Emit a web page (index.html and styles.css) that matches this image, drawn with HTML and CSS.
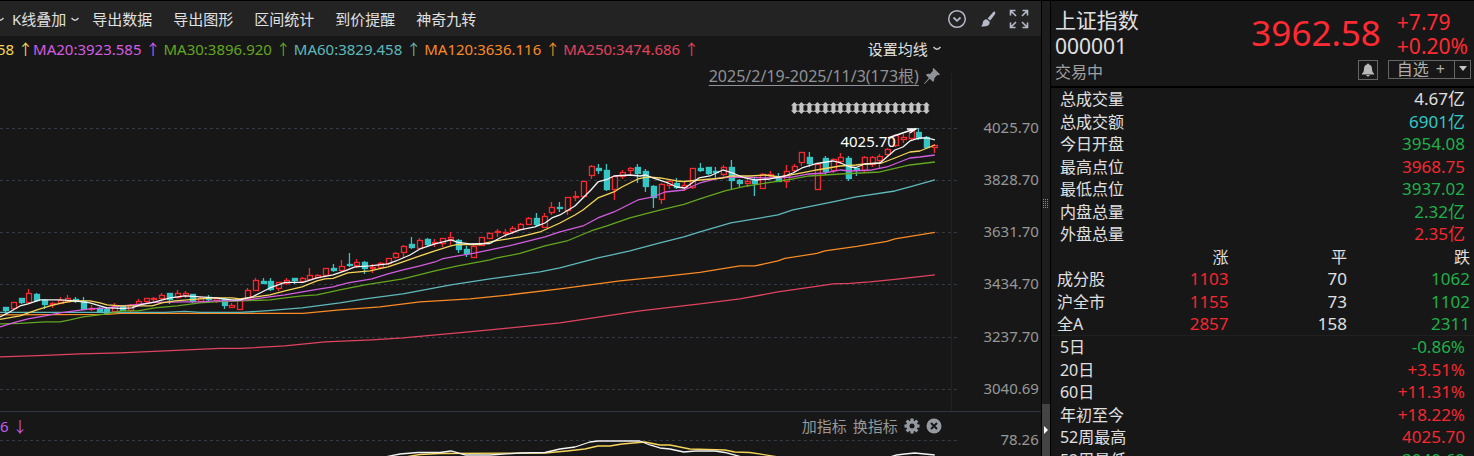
FILE: index.html
```html
<!DOCTYPE html>
<html lang="zh-CN">
<head>
    <meta charset="UTF-8">
    <meta name="viewport" content="width=device-width, initial-scale=1.0">
    <title>上证指数 000001</title>
    <link rel="stylesheet" href="styles.css">
</head>
<body>
    <div class="container">
        <!-- Chart section -->
        <main class="chart-section">
            <div class="toolbar">
                <svg class="chevron" viewBox="0 0 8 5"><path d="M0.5 1 Q4 5.500 7.500 1"/></svg>
                <button type="button" class="overlay-btn">K线叠加
                    <svg class="chevron" viewBox="0 0 8 5"><path d="M0.5 1 Q4 5.500 7.500 1"/></svg>
                </button>
                <div class="menu">
                    <button type="button">导出数据</button>
                    <button type="button">导出图形</button>
                    <button type="button">区间统计</button>
                    <button type="button">到价提醒</button>
                    <button type="button">神奇九转</button>
                </div>
                <div class="tools">
                    <button type="button" aria-label="更多">
                        <svg viewBox="0 0 20 20" fill="none" stroke="#b4bac8" stroke-width="1.500"><circle cx="10" cy="10" r="8.300"/><path d="M6.500 8.500 L10 11.800 L13.500 8.500" stroke-width="1.800"/></svg>
                    </button>
                    <button type="button" aria-label="画线">
                        <svg viewBox="0 0 20 20" fill="#b4bac8"><path d="M16.800 2.600 Q18 3.600 17 5.200 L12.300 11.600 L9.600 9.400 L15 3.200 Q15.900 2.100 16.800 2.600Z"/><path d="M8.800 10.200 L11.500 12.400 Q12 15.500 9.600 16.700 Q6.500 18 3 17.200 Q4.600 16.300 4.800 13.800 Q5.200 10.200 8.800 10.200Z"/></svg>
                    </button>
                    <button type="button" aria-label="全屏">
                        <svg viewBox="0 0 20 20" fill="none" stroke="#b4bac8" stroke-width="1.600"><path d="M1.500 6.500 V1.500 H6.500 M1.500 1.500 L7 7 M13.500 1.500 H18.500 V6.500 M18.500 1.500 L13 7 M1.500 13.500 V18.500 H6.500 M1.500 18.500 L7 13 M13.500 18.500 H18.500 V13.500 M18.500 18.500 L13 13"/></svg>
                    </button>
                </div>
            </div>

            <div class="legend">
                <span class="ma ma-yellow">58 <i>↑</i></span>
                <span class="ma ma-pink">MA20:3923.585 <i>↑</i></span>
                <span class="ma ma-green">MA30:3896.920 <i>↑</i></span>
                <span class="ma ma-teal">MA60:3829.458 <i>↑</i></span>
                <span class="ma ma-orange">MA120:3636.116 <i>↑</i></span>
                <span class="ma ma-red">MA250:3474.686 <i>↑</i></span>
                <button type="button" class="ma-setting">设置均线
                    <svg class="chevron" viewBox="0 0 8 5"><path d="M0.5 1 Q4 5.500 7.500 1"/></svg>
                </button>
            </div>

            <div class="chart">
                <div class="range">
                    <a href="#">2025/2/19-2025/11/3(173根)</a>
                    <svg viewBox="0 0 18 18" fill="#8f9296"><path d="M10.500 1 L17 7.300 L15.800 8.300 L14.300 8 L11.300 11.200 Q11.700 13.500 10.200 15 L6.800 11.800 L1.500 17 L1 16.500 L5.900 10.900 L2.800 7.800 Q4.600 6.200 7 6.900 L10 3.800 L9.600 2.200Z"/></svg>
                </div>
                <svg id="kline" class="kline" viewBox="0 64 1041 347" role="img" aria-label="日K线"></svg>
            </div>

            <div class="indicator">
                <div class="indicator-head">
                    <span class="ma-violet">6 <i>↓</i></span>
                    <div class="indicator-actions">
                        <button type="button">加指标</button>
                        <button type="button">换指标</button>
                        <button type="button" aria-label="设置">
                            <svg viewBox="0 0 16 16"><g fill="#969ba1"><circle cx="8" cy="8" r="5.600"/><path id="tooth" d="M6.400 0.500 H9.600 V15.500 H6.400Z"/><use href="#tooth" transform="rotate(45 8 8)"/><use href="#tooth" transform="rotate(90 8 8)"/><use href="#tooth" transform="rotate(135 8 8)"/></g><circle cx="8" cy="8" r="2.500" fill="#171717"/></svg>
                        </button>
                        <button type="button" aria-label="关闭">
                            <svg viewBox="0 0 16 16"><circle cx="8" cy="8" r="7.500" fill="#969ba1"/><path d="M5 5 L11 11 M11 5 L5 11" stroke="#171717" stroke-width="2"/></svg>
                        </button>
                    </div>
                </div>
                <svg id="sub" class="kline" viewBox="0 434 1041 40" role="img" aria-label="指标"></svg>
            </div>
        </main>

        <!-- Splitter -->
        <div class="splitter">
            <div class="grip"></div>
            <button type="button" class="collapse" aria-label="收起"></button>
        </div>

        <!-- Quote section -->
        <aside class="quote-section">
            <header class="quote-header">
                <div class="name">
                    <h1>上证指数</h1>
                    <p class="code">000001</p>
                    <p class="status">交易中</p>
                </div>
                <div class="quote">
                    <div class="price-line">
                        <strong class="price">3962.58</strong>
                        <div class="change">
                            <span>+7.79</span>
                            <span>+0.20%</span>
                        </div>
                    </div>
                    <div class="actions">
                        <button type="button" class="bell" aria-label="提醒">
                            <svg viewBox="0 0 14 14" fill="#b8b8b8"><path d="M7 0.500 Q8 0.500 8 1.600 Q11 2.500 11 6 Q11 9.500 13 10.500 V11.500 H1 V10.500 Q3 9.500 3 6 Q3 2.500 6 1.600 Q6 0.500 7 0.500Z M5.300 12 H8.700 Q8.500 13.500 7 13.500 Q5.500 13.500 5.300 12Z"/></svg>
                        </button>
                        <div class="favor">
                            <button type="button" class="favor-add">自选 <span>+</span></button>
                            <button type="button" class="favor-more" aria-label="更多"></button>
                        </div>
                    </div>
                </div>
            </header>

            <table class="list totals">
                <tr><th scope="row">总成交量</th><td>4.67亿</td></tr>
                <tr><th scope="row">总成交额</th><td class="cyan">6901亿</td></tr>
                <tr><th scope="row">今日开盘</th><td class="down">3954.08</td></tr>
                <tr><th scope="row">最高点位</th><td class="up">3968.75</td></tr>
                <tr><th scope="row">最低点位</th><td class="down">3937.02</td></tr>
                <tr><th scope="row">内盘总量</th><td class="down">2.32亿</td></tr>
                <tr><th scope="row">外盘总量</th><td class="up">2.35亿</td></tr>
            </table>

            <table class="breadth">
                <tr><td></td><th scope="col">涨</th><th scope="col">平</th><th scope="col">跌</th></tr>
                <tr><th scope="row">成分股</th><td class="up">1103</td><td>70</td><td class="down">1062</td></tr>
                <tr><th scope="row">沪全市</th><td class="up">1155</td><td>73</td><td class="down">1102</td></tr>
                <tr><th scope="row">全A</th><td class="up">2857</td><td>158</td><td class="down">2311</td></tr>
            </table>

            <table class="list periods">
                <tr><th scope="row">5日</th><td class="down">-0.86%</td></tr>
                <tr><th scope="row">20日</th><td class="up">+3.51%</td></tr>
                <tr><th scope="row">60日</th><td class="up">+11.31%</td></tr>
                <tr><th scope="row">年初至今</th><td class="up">+18.22%</td></tr>
                <tr><th scope="row">52周最高</th><td class="up">4025.70</td></tr>
                <tr><th scope="row">52周最低</th><td class="down">3040.69</td></tr>
            </table>
        </aside>
    </div>

    <script src="chart.js"></script>
</body>
</html>
```

FILE: styles.css
```css
* {
    box-sizing: border-box;
}
body {
    margin: 0;
    height: 100vh;
    overflow: hidden;
    background-color: #171717;
    color: #e0e0e0;
    font-family: "Noto Sans", "Noto Sans CJK SC", sans-serif;
    font-size: 15px;
    line-height: 20px;
}
button {
    padding: 0;
    border: none;
    background: none;
    color: inherit;
    font: inherit;
    white-space: nowrap;
    cursor: pointer;
}
svg {
    display: block;
}
h1, p {
    margin: 0;
    font-weight: normal;
}
.container {
    display: grid;
    grid-template-columns: minmax(0, 246fr) 10px minmax(0, 100fr);
    height: 100%;
    border-top: 1px solid #000;
}
.chart-section {
    overflow: hidden;
}

/* toolbar */
.toolbar {
    display: flex;
    align-items: center;
    height: 35px;
    padding: 1px 12px 0 0;
    background-color: #232323;
}
.chevron {
    flex: none;
    width: 8px;
    height: 5px;
    fill: none;
    stroke: #d0d0d0;
    stroke-width: 1.500;
}
.toolbar > .chevron {
    margin: 0 8px 0 -4px;
}
.overlay-btn, .ma-setting {
    display: flex;
    align-items: center;
    gap: 5px;
}
.menu {
    display: flex;
    gap: 21px;
    margin-left: 13px;
}
.tools {
    display: flex;
    gap: 11px;
    margin-left: auto;
}
.tools svg {
    width: 20px;
    height: 20px;
}

/* moving averages */
.legend {
    display: flex;
    align-items: center;
    height: 28px;
    padding: 0 100px 3px 0;
    white-space: nowrap;
}
.ma {
    margin-right: 3px;
}
.ma:first-child {
    margin-left: -3px;
    margin-right: 0;
}
.legend i, .indicator-head i {
    font-family: "Noto Sans CJK SC", sans-serif;
    font-style: normal;
}
.ma-yellow { color: #f5d65a; }
.ma-pink { color: #d35de0; }
.ma-green { color: #63a61f; }
.ma-teal { color: #5fb9bc; }
.ma-orange { color: #f98b25; }
.ma-red { color: #e0435f; }
.ma-violet { color: #c55cf0; }
.ma-setting {
    margin-left: auto;
}

/* chart */
.chart {
    position: relative;
}
.range {
    position: absolute;
    top: 2px;
    right: 100px;
    display: flex;
    align-items: center;
    gap: 4px;
}
.range a {
    color: #8f9296;
    font-size: 16px;
    text-underline-offset: 3px;
}
.range svg {
    width: 18px;
    height: 18px;
}
.kline {
    width: 100%;
    overflow: visible;
    font-size: 15px;
}
.grid-line {
    stroke: #363b47;
    stroke-dasharray: 3 3;
}
.axis-line {
    stroke: #242424;
}
.axis-text {
    fill: #979797;
    text-anchor: end;
}
.line {
    fill: none;
    stroke-width: 1.300;
    stroke-linejoin: round;
}
.candle-up {
    fill: #171717;
    stroke: #f5272f;
    stroke-width: 1.300;
}
.candle-down {
    fill: #35c5c5;
    stroke: #35c5c5;
    stroke-width: 1.300;
}
.mark {
    fill: #c4c4c4;
}
.peak-text {
    fill: #fff;
    text-anchor: end;
}
.peak-line {
    fill: none;
    stroke: #fff;
    stroke-width: 1.500;
}

/* indicator */
.indicator {
    border-top: 1px solid #303641;
}
.indicator-head {
    display: flex;
    justify-content: space-between;
    align-items: center;
    height: 22px;
    padding: 6px 99px 0 0;
}
.indicator-actions {
    display: flex;
    align-items: center;
    gap: 6px;
    color: #989898;
}
.indicator-actions svg {
    width: 16px;
    height: 16px;
}

/* splitter */
.splitter {
    display: flex;
    flex-direction: column;
    align-items: center;
    background-color: #1d1d1d;
    border: solid #000;
    border-width: 0 1px;
}
.grip {
    width: 6px;
    height: 10px;
    margin: auto;
    background: repeating-linear-gradient(#1d1d1d 0 1px, transparent 1px 2px), repeating-linear-gradient(90deg, #8a8a8a 0 1px, #1d1d1d 1px 2px);
}
.collapse {
    display: flex;
    align-items: center;
    justify-content: center;
    width: 8px;
    height: 52px;
    background-color: #444;
}
.collapse::before {
    content: "";
    border: 4px solid transparent;
    border-left-color: #fff;
    border-right-width: 0;
}

/* quote panel */
.quote-section {
    overflow: hidden;
}
.quote-header {
    display: flex;
    justify-content: space-between;
    height: 87px;
    padding: 6px 3px 0 4px;
    border-bottom: 2px solid #000;
}
.name h1, .code {
    font-size: 21px;
    line-height: 26px;
}
.status {
    font-size: 16px;
    line-height: 26px;
    color: #a0a0a0;
}
.price-line {
    display: flex;
    justify-content: flex-end;
    gap: 16px;
    padding-right: 3px;
    color: #ff2a32;
}
.price {
    font-size: 35px;
    line-height: 52px;
    font-weight: normal;
}
.change {
    display: flex;
    flex-direction: column;
    padding-top: 3px;
    font-size: 21px;
    line-height: 24px;
}
.actions {
    display: flex;
    justify-content: flex-end;
    gap: 10px;
    padding-top: 1px;
}
.bell {
    display: flex;
    align-items: center;
    justify-content: center;
    width: 20px;
    height: 20px;
    border: 1px solid #666;
}
.bell svg {
    width: 14px;
    height: 14px;
}
.favor {
    display: flex;
    height: 19px;
    border: 1px solid #666;
    color: #b0b0b0;
}
.favor-add {
    padding: 0 9px 0 8px;
    font-size: 16px;
    line-height: 17px;
}
.favor-add span {
    margin-left: 3px;
}
.favor-more {
    display: flex;
    justify-content: center;
    width: 16px;
    padding-top: 5px;
    border-left: 1px solid #666;
}
.favor-more::before {
    content: "";
    border: 4px solid transparent;
    border-top: 5px solid #c4c4c4;
    border-bottom-width: 0;
}

table {
    width: 100%;
    border-collapse: collapse;
    table-layout: fixed;
    font-size: 16px;
    line-height: 20px;
}
tr {
    height: 22px;
}
.totals tr:nth-child(even), .breadth tr:nth-child(odd), .periods tr:nth-child(odd) {
    height: 23px;
}
th, td {
    padding: 0;
    font-weight: normal;
    text-align: right;
}
td {
    font-size: 17px;
}
th[scope="row"] {
    text-align: left;
}
.list th {
    padding-left: 9px;
}
.list td {
    padding-right: 9px;
}
.breadth th[scope="row"] {
    padding-left: 6px;
}
.breadth tr > :nth-child(1) { width: 18%; }
.breadth tr > :nth-child(2) { width: 24%; }
.breadth tr > :nth-child(3) { width: 28%; }
.breadth tr > :nth-child(4) { padding-right: 4px; }
.breadth {
    border-bottom: 1px solid #202020;
}
.up { color: #f5272f; }
.down { color: #1fb04b; }
.cyan { color: #35c5c5; }
```

FILE: chart.js
```javascript
// [up = 1 / down = 0, body top, body bottom, high, low]
const candles = [
    [0,307,310,307,313],[1,302,308,302,308],[0,298,302,298,303],[1,293,302,289,302],[0,294,300,293,301],
    [0,300,304,299,308],[1,303,304,302,307],[1,300,303,297,303],[1,298,301,295,301],[0,299,301,297,302],
    [0,301,309,297,309],[1,308,309,305,310],[0,308,312,307,312],[0,309,313,308,313],[1,306,311,303,312],
    [0,306,310,305,310],[1,305,310,304,311],[1,301,304,299,305],[1,298,301,298,302],[1,298,299,297,301],
    [1,295,298,293,299],[0,293,299,293,303],[1,293,297,290,298],[1,293,295,291,297],[0,294,301,294,302],
    [1,298,301,297,302],[0,297,299,295,302],[1,298,300,297,302],[0,299,305,298,308],[1,305,307,303,307],
    [1,300,309,299,309],[1,290,299,288,299],[1,280,290,278,290],[0,281,283,278,283],[0,281,289,278,290],
    [1,282,288,282,290],[1,280,283,278,284],[0,278,280,278,283],[1,278,281,277,282],[1,275,279,268,280],
    [1,275,277,274,278],[1,268,275,268,276],[0,268,270,264,271],[1,266,270,260,271],[0,264,265,253,266],
    [1,262,265,259,267],[0,262,268,261,273],[1,267,268,264,272],[1,263,267,262,268],[1,258,263,258,264],
    [1,253,257,252,258],[1,246,252,245,257],[0,244,247,237,248],[1,240,248,238,248],[0,239,244,238,246],
    [1,242,243,239,246],[1,238,243,238,246],[1,237,239,232,244],[0,240,249,239,252],[0,249,253,246,256],
    [1,246,257,245,257],[1,237,245,237,245],[1,233,238,232,238],[1,231,232,229,236],[1,232,233,229,236],
    [1,228,231,226,233],[1,224,229,223,229],[1,218,224,217,224],[0,218,224,213,225],[1,216,227,213,227],
    [1,207,212,202,214],[0,207,208,202,211],[1,197,210,197,214],[1,196,197,191,200],[1,181,196,181,197],
    [1,166,175,165,178],[0,168,170,164,173],[0,170,189,164,190],[1,176,189,176,199],[1,172,176,170,178],
    [1,168,170,167,174],[0,167,173,164,182],[0,171,186,169,191],[0,186,197,185,207],[1,184,199,183,203],
    [1,181,185,180,188],[0,183,187,178,188],[1,185,187,182,190],[1,168,187,168,188],[0,168,170,163,171],
    [0,167,173,167,174],[0,171,172,167,178],[1,167,174,165,176],[0,167,180,160,188],[0,180,183,179,186],
    [1,181,183,178,186],[0,180,183,177,195],[1,174,188,173,188],[1,174,175,171,178],[0,178,181,173,181],
    [1,171,181,165,187],[1,166,170,164,171],[1,152,162,152,165],[0,157,163,152,166],[1,164,189,163,189],
    [0,158,171,156,174],[1,159,170,158,172],[1,157,161,153,163],[0,158,178,156,180],[0,168,169,167,175],
    [1,157,170,156,171],[1,157,164,156,166],[1,156,160,154,168],[1,149,154,148,155],[1,135,145,134,146],
    [1,137,139,134,142],[1,130,138,128,140],[0,132,138,128,139],[0,137,147,136,148],[1,145,147,144,152]
];

const averages = [
    ['#e0435f', '0,357 45,355.5 80,354 120,353 165,351 220,348.5 240,348.5 285,346 325,342 372,340 403,338 458,333 490,330 560,323 640,311 700,304 740,299 778,292 785,291 820,286 833,284 850,283.5 870,282 895,279.5 935,275'],
    ['#f98b25', '0,315 107,314.5 120,313.5 303,313.5 340,310 380,307 420,302 470,299 500,296 560,289 620,281 660,277 700,272.5 740,266 755,266 778,261 785,258.5 817,253.5 825,251 857,246.5 887,241.5 895,239 935,232.5'],
    ['#5fb9bc', '0,312.5 165,312.5 185,311.5 200,312.5 240,312.5 265,311 302,308 340,303 365,299 403,294 435,288 451,285 490,279 540,272 560,268 598,258 630,251 660,243 684,237 700,232 731,223 778,215 793,210 833,202 856,197 895,191 910,187 935,180'],
    ['#63a61f', '0,324 20,323.5 45,322 60,322 70,320 83,317 107,314 122,311 138,311 155,308 177,306 200,303 215,302 240,301 270,300 285,298 302,296 317,295 340,290 365,285 403,279 435,271 458,266 490,260 497,258 520,253.5 545,246 567,241 591,231 607,226 630,218 653,212 665,209 684,204.5 700,199 725,191 747,186 793,179 809,176 841,174 880,172 910,165 935,162'],
    ['#d35de0', '0,327 13,323 28,319 45,316 60,313 75,311 90,309 107,308 122,306 138,304.5 155,302.5 185,302 200,302 215,301 232,301 247,300 262,298 285,295 317,289.5 333,287 348,283 372,279 388,274 403,270 420,266 435,262 442,259 458,256 473,253.5 490,250 513,245 545,237 560,232 583,226 598,218 614,212 638,200 653,197 665,192 684,190 700,183 720,178 731,177 770,178 793,177 809,174 825,173 841,170 850,171 872,170 887,167 910,158 920,157 935,155'],
    ['#f5d65a', '0,319.5 20,316 37,310 50,306 62,303 75,301 90,301 100,303 107,305 122,306 138,306 152,306 162,303 175,301 200,299 215,298 232,298 240,299 247,298 270,295 285,291 302,287 317,281 325,279 333,278.5 348,273 370,271 388,267 403,262 420,256 435,251 451,246 458,244.5 480,244.5 495,241 520,237 540,232 560,223 575,215 583,210 598,198 614,192 622,187 638,179 648,177 660,178 677,181 684,181.5 700,180 723,178 731,176 750,176 765,175 780,177 802,173 817,170 840,166 856,165 865,164 882,163 895,158 910,152 920,151 935,145'],
    ['#f4f4f4', '0,317 8,313 20,306 28,304 40,300 60,300 75,301 90,303 100,306 107,308 122,308.5 132,308 140,305 155,302 170,298 185,296 200,297 215,298 232,300 240,300 252,297 262,292 270,288 285,282.5 303,282.5 317,278 333,275 345,271 355,267 370,266 388,264 396,261 410,255 420,249 435,244 451,240 458,242.5 470,244 490,243.5 498,239 505,235.5 520,230 535,227 545,223 552,218 560,215 575,206 583,198 591,190 598,182 607,179.5 614,176 630,175 640,176 646,175 653,178 668,183 677,187 685,188 692,183 699,178 710,176 723,170 735,174 745,178 755,180 770,179 785,176 793,173 802,168 817,163.5 833,161 841,163 850,167 856,167.5 865,164 880,163 887,157 895,150 903,147 910,141 920,138 927,138 935,140']
];

const indicators = [
    ['#f5d65a', '405,457 420,454.5 440,453.5 545,453 567,451 585,449 598,446 610,446 622,444 645,442 660,445 670,445 690,449 725,450 735,452 750,452.5 779,457'],
    ['#f4f4f4', '385,457 400,454 418,452.5 440,452.5 451,451 465,455 490,455 520,453 545,452.5 560,449 575,447 590,442 598,441 640,441 650,445 660,448 670,449 684,452 695,451 715,451 725,452.5 742,457'],
    ['#f4f4f4', '890,457 897,455 905,454 915,453 925,454 935,455']
];

const scale = [
    [128.5, '4025.70'], [180.5, '3828.70'], [232.5, '3631.70'],
    [284.5, '3434.70'], [337.5, '3237.70'], [389.5, '3040.69']
];

function xOf(i) {
    return Math.round(5 + i * 7.807) + 0.5;
}

function gridRow(y, label) {
    return `<line class="grid-line" x1="0" y1="${y}" x2="957" y2="${y}"/>
        <text class="axis-text" x="1039" y="${y + 5}">${label}</text>`;
}

function line([color, points]) {
    return `<polyline class="line" stroke="${color}" points="${points}"/>`;
}

function candle([up, top, bottom, high, low], i) {
    const x = xOf(i);
    return `<g class="${up ? 'candle-up' : 'candle-down'}">
        <path d="M${x} ${high}V${low + 1}"/>
        <rect x="${x - 2}" y="${top + 0.5}" width="5" height="${bottom - top}"/></g>`;
}

// double arrows above the last bars
function marks() {
    let html = '<path stroke="#8a8a8a" d="M794 104.5H928M794 111.5H928"/>';
    for (let i = 101; i <= 118; i++) {
        html += `<path class="mark" d="M${xOf(i)} 102l3.500 3.500h-1.500v5h1.500l-3.500 3.500l-3.500 -3.500h1.500v-5h-1.500z"/>`;
    }
    return html;
}

document.getElementById('kline').innerHTML =
    scale.map(row => gridRow(row[0], row[1])).join('') +
    '<line class="axis-line" x1="951.5" y1="73" x2="951.5" y2="411"/>' +
    candles.map(candle).join('') +
    averages.map(line).join('') +
    marks() +
    '<path class="peak-line" d="M888 138L916 128.500M907 129H916L910 133"/>' +
    '<text class="peak-text" x="896" y="147">4025.70</text>';

document.getElementById('sub').innerHTML =
    gridRow(440.5, '78.26') + indicators.map(line).join('');
```
